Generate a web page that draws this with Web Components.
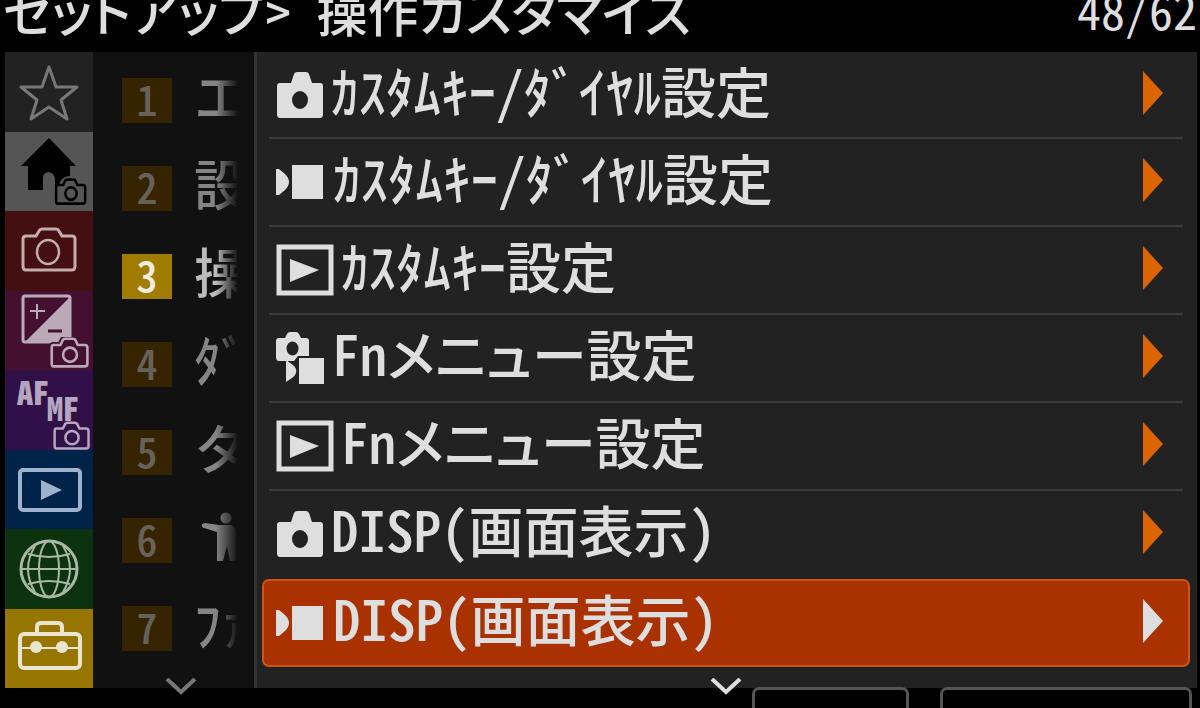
<!DOCTYPE html>
<html lang="ja">
<head>
<meta charset="utf-8">
<title>操作カスタマイズ</title>
<style>
html, body { margin: 0; background: #000; color: #dedede; overflow: hidden;
  font-family: "Noto Sans CJK JP", "Noto Sans", sans-serif; font-weight: 500; }
</style>
</head>
<body>
<camera-menu></camera-menu>

<script>
const CAM = '<path fill="currentColor" fill-rule="evenodd" d="M4 12h11l3-9q1-2 3-2h9q2 0 3 2l3 9h8q3 0 3 3v28q0 4-3 4H4q-3 0-3-4V15q0-3 3-3zM24 20a8 9 0 1 0 0 18a8 9 0 1 0 0-18z"/>';
const OUTCAM = 'M3 9h8l3-6q1-1 3-1h8q2 0 3 1l3 6h8q3 0 3 3v18q0 3-3 3H3q-2 0-2-3V12q0-3 2-3z';
const ICONS = {
  photo: ['0 0 48 48', 48, 48, CAM],
  movie: ['0 0 50 48', 50, 48, '<path fill="currentColor" d="M0 11l3 0 6 5q4 4 4 8t-4 8l-6 5-3 0zM16 7h31v34H16z"/>'],
  play: ['0 0 58 52', 58, 52, '<path fill="none" stroke="currentColor" stroke-width="5" d="M3 3h52v46H3z"/><path fill="currentColor" d="M14 15l29 11-29 12z"/>'],
  both: ['0 0 49 52', 49, 52, '<path fill="currentColor" fill-rule="evenodd" d="M3 6h6l2-4q1-2 3-2h6q2 0 3 2l2 4h5q3 0 3 3v15H22l-4 5H3q-3 0-3-4V9q0-3 3-3zM16.500 9.500a6 7 0 1 0 0 14a6 7 0 1 0 0-14z"/><path fill="currentColor" d="M10 28l7 5q4 3 3 8-1 3-4 5l-6 4zM23 26h25v26H23z"/>'],
  star: ['0 0 88 80', 88, 80, '<path fill="none" stroke="#777" stroke-width="3" stroke-linejoin="round" d="M44 15l7 20h21L56 48l6 19-18-12-18 12 6-19-16-13h21z"/>'],
  home: ['0 0 88 80', 88, 80, '<path d="M44 6l27 28h-6v10q-7 0-10 6l-2 8H37V48q0-8 6-8 5 0 6 6v12H23V34h-7z"/><path fill="#555" d="M38 58V46q0-5 5-6 6 0 7 7v11z"/><svg x="49" y="46" width="34" height="28" viewBox="-2 0 48 36" preserveAspectRatio="none"><path fill="#555" stroke="#000" stroke-width="3.500" d="'+OUTCAM+'"/><circle cx="22" cy="20" r="8" fill="none" stroke="#000" stroke-width="3.500"/></svg>'],
  shoot: ['0 0 88 80', 88, 80, '<path fill="none" stroke="#c5adad" stroke-width="3" d="M21 25h10l3-5q1-2 3-2h14q2 0 3 2l3 5h10q3 0 3 3v27q0 4-3 4H21q-3 0-3-4V28q0-3 3-3z"/><ellipse cx="43" cy="41" rx="11" ry="12" fill="none" stroke="#c5adad" stroke-width="2.500"/>'],
  expo: ['0 0 88 80', 88, 80, '<rect x="18" y="5" width="47" height="46" rx="2" fill="none" stroke="#bca9b8" stroke-width="3"/><path fill="#bca9b8" d="M65 6v45H20z"/><path stroke="#bca9b8" stroke-width="2" d="M25 20h15M32 13v15"/><path stroke="#43102f" stroke-width="3" d="M43 40h14"/><svg x="45" y="46" width="40" height="32" viewBox="-1 0 46 36" preserveAspectRatio="none"><path stroke="#43102f" stroke-width="7" fill="#43102f" d="'+OUTCAM+'"/><path fill="none" stroke="#bca9b8" stroke-width="3" d="'+OUTCAM+'"/><circle cx="22" cy="20" r="8" fill="none" stroke="#bca9b8" stroke-width="3"/></svg>'],
  focus: ['-1 0 46 36', 38, 30, '<path fill="none" stroke="#b5a5c0" stroke-width="3" d="'+OUTCAM+'"/><circle cx="22" cy="20" r="8" fill="none" stroke="#b5a5c0" stroke-width="3"/>'],
  view: ['0 0 88 80', 88, 80, '<rect x="15" y="20" width="60" height="40" rx="3" fill="none" stroke="#9eb2cd" stroke-width="4"/><path fill="#9eb2cd" d="M36 30l21 10-21 10z"/>'],
  net: ['0 0 88 80', 88, 80, '<g fill="none" stroke="#a7b9a5" stroke-width="3"><circle cx="44" cy="40" r="28"/><g stroke-width="2"><ellipse cx="44" cy="40" rx="10" ry="28"/><path d="M16 40h56M23 25q21 6 42 0M23 55q21-6 42 0M30 17q-14 23 0 46M58 17q14 23 0 46"/></g></g>'],
  setup: ['0 0 88 80', 88, 80, '<g fill="none" stroke="#eae5d0" stroke-width="4"><rect x="15" y="25" width="60" height="34" rx="4"/><path d="M32 24v-6q0-4 4-4h17q4 0 4 4v6"/><path stroke-width="2" d="M15 39h60"/></g><circle cx="31" cy="38" r="6" fill="#eae5d0"/><circle cx="57" cy="38" r="6" fill="#eae5d0"/>'],
  person: ['-3 0 44 50', 44, 50, '<circle cx="29" cy="6" r="5.500" fill="currentColor"/><path fill="currentColor" d="M8 11l14 2h13q4 2 4 7v29h-6l-3-15-4 15h-6V20L7 16q-3-1-2-4z"/>'],
  down: ['0 0 32 18', 32, 18, '<path fill="none" stroke="currentColor" stroke-width="4" d="M2 1l14 13L30 1"/>'],
  right: ['0 0 22 46', 22, 46, '<path fill="currentColor" d="M1 1l20 22L1 45z"/>']
};

function define(name, css, html, setup) {
  const template = document.createElement('template');
  template.innerHTML = '<style>' + css + '</style>' + html;
  customElements.define(name, class extends HTMLElement {
    constructor() {
      super();
      this.attachShadow({ mode: 'open' }).append(template.content.cloneNode(true));
    }
    connectedCallback() { if (setup) setup(this, this.shadowRoot); }
  });
}

define('menu-icon', ':host{display:block;flex:none}svg{display:block}', '<span></span>', (host, root) => {
  const icon = ICONS[host.getAttribute('name')];
  if (!icon) return;
  const [box, w, h, body] = icon;
  root.querySelector('span').innerHTML = `<svg viewBox="${box}" width="${w}" height="${h}" aria-hidden="true">${body}</svg>`;
});

define('menu-header', `
  :host{display:flex;justify-content:space-between;align-items:flex-end;height:52px;padding:0 3px;overflow:hidden;box-sizing:border-box;white-space:nowrap}
  h1{margin:0;font-size:51px;line-height:84px;font-weight:500;font-feature-settings:"palt","hwid"}
  span{font-size:48px;line-height:86px;font-weight:400;font-feature-settings:"hwid"}`,
  '<h1><slot></slot></h1><span><slot name="page"></slot></span>');

define('menu-tab', `
  :host{display:block;min-height:0}
  button{all:unset;display:block;box-sizing:border-box;width:100%;height:100%;overflow:hidden;background:var(--tone);color:#b5a5c0}
  .af{display:grid;grid-template-columns:30px 36px;grid-template-rows:16px 16px 30px;padding:8px 0 0 12px;
    font-size:32px;line-height:16px;font-weight:700;font-feature-settings:"hwid"}
  .af b:nth-child(2){grid-area:2/2}
  .af menu-icon{grid-area:3/2;margin:6px 0 0 6px}`,
  '<button type="button"></button>', (host, root) => {
    const b = root.querySelector('button'), n = host.getAttribute('icon');
    b.setAttribute('aria-label', n);
    b.innerHTML = n === 'focus'
      ? '<span class="af"><b>AF</b><b>MF</b><menu-icon name="focus"></menu-icon></span>'
      : `<menu-icon name="${n}"></menu-icon>`;
  });

define('menu-group', `
  :host{display:block}
  button{all:unset;display:flex;align-items:center;gap:22px;height:88px;box-sizing:border-box;padding:8px 0 0 29px;color:#858585}
  b{flex:none;width:50px;height:45px;background:#362300;color:#66625a;font-size:42px;line-height:39px;font-weight:500;font-feature-settings:"hwid";text-align:center}
  span{display:block;width:44px;height:56px;padding-bottom:10px;overflow:hidden;white-space:nowrap;font-size:54px;line-height:56px;
    -webkit-mask-image:linear-gradient(90deg,#000 50%,transparent);mask-image:linear-gradient(90deg,#000 50%,transparent)}
  :host([current]) b{background:#a07d00;color:#f0ece0}
  :host([current]) button{color:#bbb}
  ::slotted(menu-icon){margin-top:5px}`,
  '<button type="button"><b></b><span><slot></slot></span></button>',
  (host, root) => { root.querySelector('b').textContent = host.getAttribute('number'); });

define('menu-item', `
  :host{display:block;height:88px;box-sizing:border-box;padding:0 14px 0 12px}
  button{all:unset;display:flex;align-items:center;width:100%;height:100%;box-sizing:border-box;border-bottom:2px solid #3c3c3c;padding:0 19px 4px 7px;color:#dedede}
  .label{flex:1;margin-left:7px;padding-bottom:8px;font-size:55px;line-height:72px;white-space:nowrap;font-feature-settings:"hwid"}
  :host([proportional]) .label{font-feature-settings:"hwid","palt"}
  .lead{margin-top:4px}
  .arrow{color:#dc6500}
  :host([before]) button{border-color:transparent}
  :host([selected]){padding:0 7px 0 5px}
  :host([selected]) button{background:#a93200;border:2px solid #cf5412;border-radius:7px;padding:0 24px 4px 12px}
  :host([selected]) .arrow{color:#dedede}`,
  '<button type="button"><menu-icon class="lead"></menu-icon><span class="label"><slot></slot></span><menu-icon class="arrow" name="right"></menu-icon></button>',
  (host, root) => {
    const i = document.createElement('menu-icon');
    i.className = 'lead'; i.setAttribute('name', host.getAttribute('icon'));
    root.querySelector('.lead').replaceWith(i);
  });

define('menu-footer', `
  :host{display:grid;grid-template-columns:1fr 157px 252px;gap:31px;padding-right:8px;height:21px;overflow:hidden;margin-top:-1px;position:relative}
  button{all:unset;box-sizing:border-box;height:60px;border:3px solid #555;border-radius:7px;background:#000;
    font-size:45px;line-height:72px;text-align:right;padding-right:23px}`,
  '<span></span><button type="button" aria-label="MENU"></button><button type="button">閉じる</button>');

define('camera-menu', `
  :host{display:grid;grid-template-rows:52px 636px 1fr;height:100vh;overflow:hidden}
  main{display:grid;grid-template-columns:88px 161px 1fr;padding:0 3px 0 5px;min-height:0}
  nav{display:grid;grid-template-rows:repeat(8,1fr);min-height:0}
  .groups{background:#111;position:relative}
  .clip{height:636px;overflow:hidden}
  .items{background:#222;border-left:3px solid #333;position:relative}
  .items menu-item:first-of-type{height:87px}
  .more{position:absolute;bottom:-8px;z-index:2}
  .groups .more{left:72px;color:#777}
  .items .more{left:453px}
  menu-footer{line-height:1}`,
  `<menu-header>セットアップ&gt; 操作カスタマイズ<span slot="page">48/62</span></menu-header>
  <main>
    <nav>
      <menu-tab icon="star" style="--tone:#222"></menu-tab>
      <menu-tab icon="home" style="--tone:#555"></menu-tab>
      <menu-tab icon="shoot" style="--tone:#430f10"></menu-tab>
      <menu-tab icon="expo" style="--tone:#43102f"></menu-tab>
      <menu-tab icon="focus" style="--tone:#301047"></menu-tab>
      <menu-tab icon="view" style="--tone:#00234a"></menu-tab>
      <menu-tab icon="net" style="--tone:#0d320f"></menu-tab>
      <menu-tab icon="setup" style="--tone:#977600"></menu-tab>
    </nav>
    <section class="groups"><div class="clip">
      <menu-group number="1">エ</menu-group>
      <menu-group number="2">設</menu-group>
      <menu-group number="3" current>操</menu-group>
      <menu-group number="4">ﾀﾞ</menu-group>
      <menu-group number="5">タ</menu-group>
      <menu-group number="6"><menu-icon name="person"></menu-icon></menu-group>
      <menu-group number="7">ﾌｧ</menu-group>
    </div><menu-icon class="more" name="down"></menu-icon></section>
    <section class="items"><div class="clip">
      <menu-item icon="photo">ｶｽﾀﾑｷｰ/ﾀﾞｲﾔﾙ設定</menu-item>
      <menu-item icon="movie">ｶｽﾀﾑｷｰ/ﾀﾞｲﾔﾙ設定</menu-item>
      <menu-item icon="play">ｶｽﾀﾑｷｰ設定</menu-item>
      <menu-item icon="both" proportional>Fnメニュー設定</menu-item>
      <menu-item icon="play" proportional>Fnメニュー設定</menu-item>
      <menu-item icon="photo" before>DISP(画面表示)</menu-item>
      <menu-item icon="movie" selected>DISP(画面表示)</menu-item>
    </div><menu-icon class="more" name="down"></menu-icon></section>
  </main>
  <menu-footer></menu-footer>`);
</script>
</body>
</html>
